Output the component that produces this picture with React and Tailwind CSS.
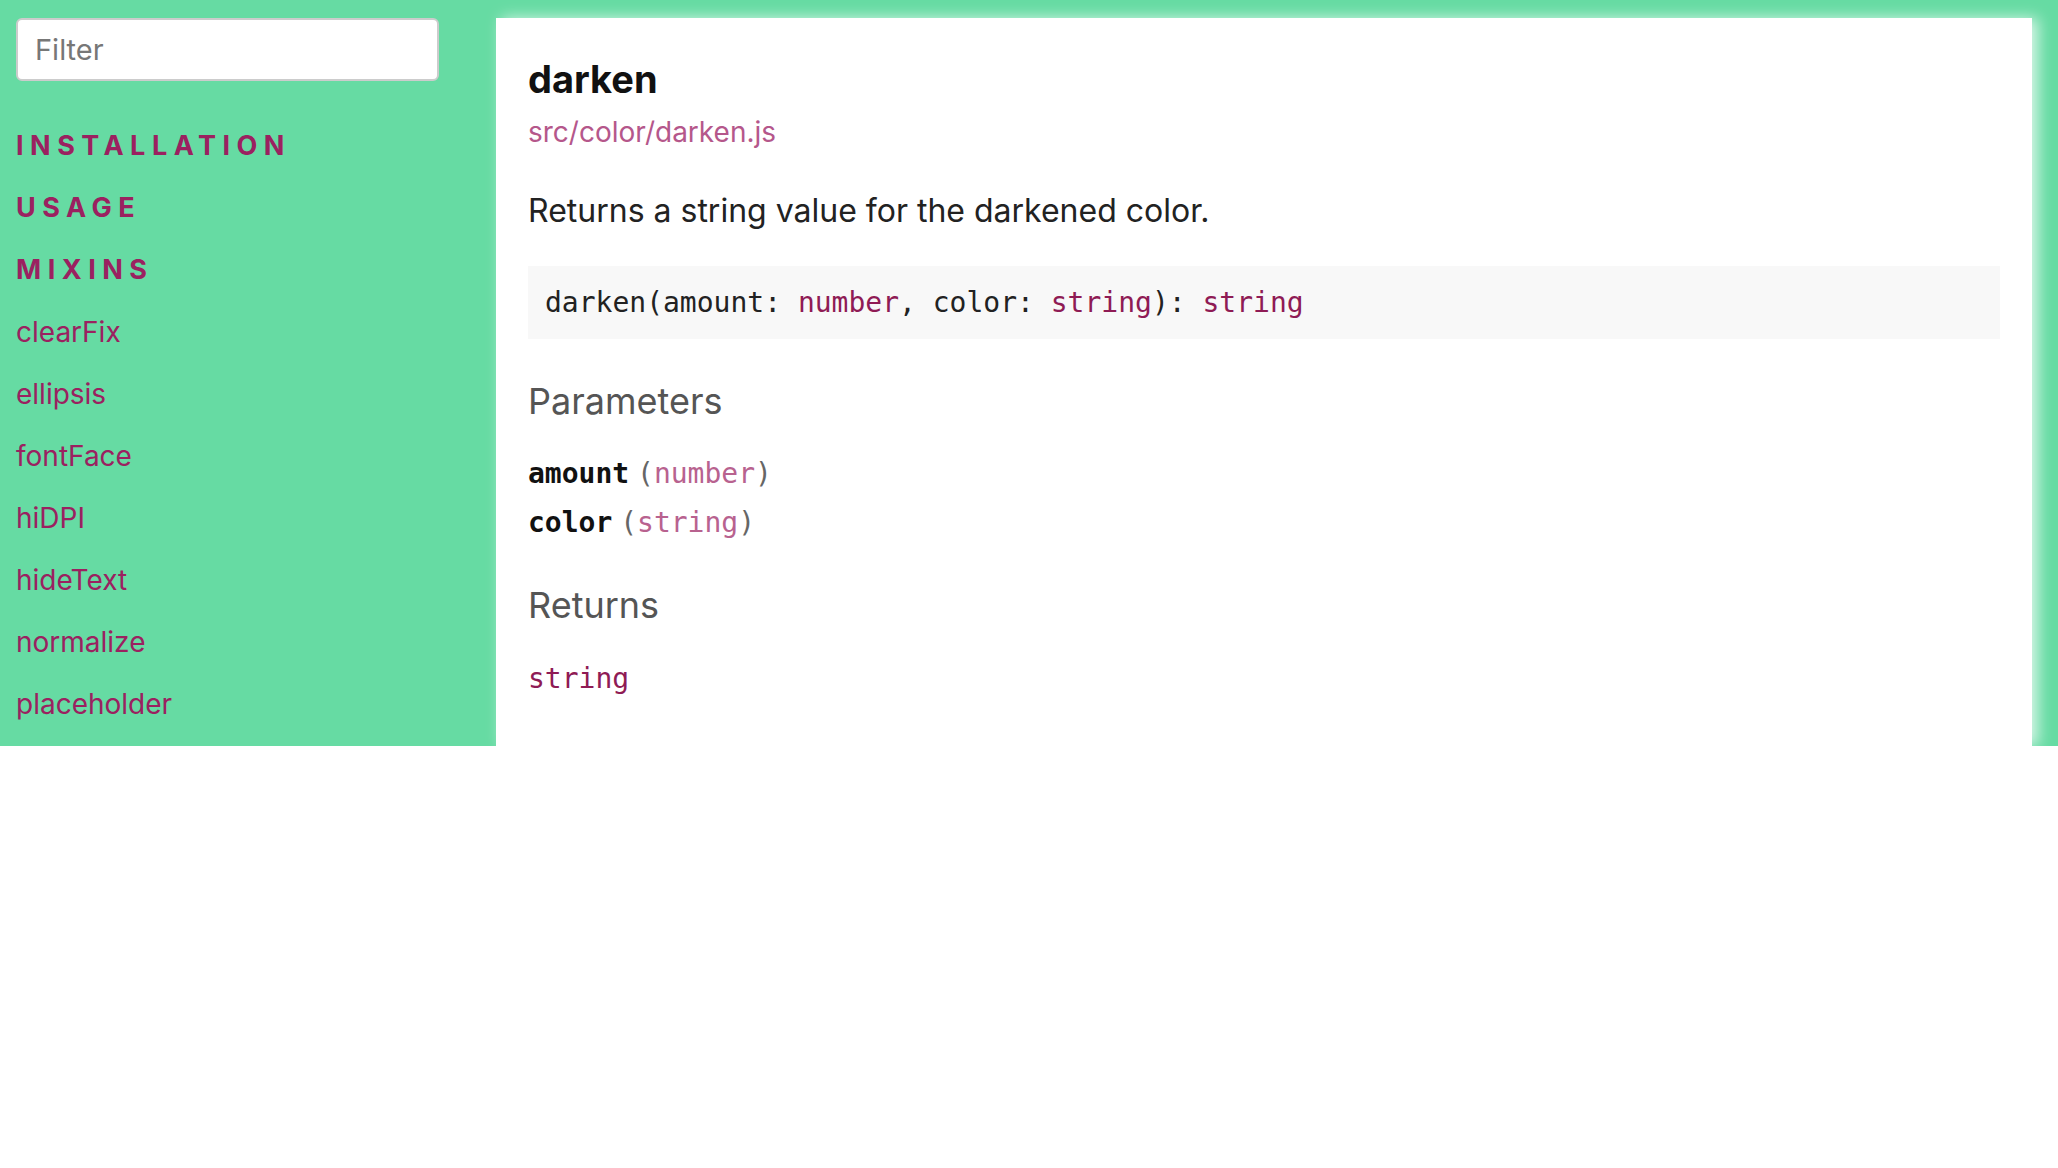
import React from "react";

const sans = { fontFamily: "Inter, 'Noto Sans', sans-serif" };
const mono = { fontFamily: "'DejaVu Sans Mono', monospace" };

function NavHeading({ children }) {
  return (
    <div className="h-[62px] leading-[62px] text-[27px] font-bold tracking-[6.5px] text-[#9b2160]">
      {children}
    </div>
  );
}

function NavItem({ children }) {
  return (
    <div className="h-[62px] leading-[62px] text-[28px] text-[#9b2160]">{children}</div>
  );
}

function Param({ name, type }) {
  return (
    <div>
      <span className="font-bold text-[#111]" style={mono}>{name}</span>
      <span style={sans}> </span>
      <span className="text-[#666]" style={mono}>
        (<span className="text-[#b8628f]">{type}</span>)
      </span>
    </div>
  );
}

export default function App() {
  return (
    <div className="w-[2058px] bg-white min-h-[1168px]" style={sans}>
      <div className="flex h-[746px] bg-[#66dba3]">
        <aside className="w-[496px] shrink-0 pl-4 pt-[18px]">
          <input
            placeholder="Filter"
            className="block w-[423px] h-[63px] bg-white border-2 border-[#cccccc] rounded-md px-[17px] text-[29px] text-[#333] placeholder:text-[#777] outline-none"
          />
          <nav className="mt-[34px]">
            <NavHeading>INSTALLATION</NavHeading>
            <NavHeading>USAGE</NavHeading>
            <NavHeading>MIXINS</NavHeading>
            <NavItem>clearFix</NavItem>
            <NavItem>ellipsis</NavItem>
            <NavItem>fontFace</NavItem>
            <NavItem>hiDPI</NavItem>
            <NavItem>hideText</NavItem>
            <NavItem>normalize</NavItem>
            <NavItem>placeholder</NavItem>
          </nav>
        </aside>
        <main className="mt-[18px] w-[1536px] shrink-0 bg-white px-8 pt-[39px] shadow-[6px_0_14px_rgba(255,255,255,0.75)]">
          <h1 className="h-[44px] leading-[44px] text-[38px] font-bold text-[#111]">darken</h1>
          <div className="mt-[14px] h-[34px] leading-[34px] text-[28px] text-[#b5578b]">
            src/color/darken.js
          </div>
          <p className="mt-[44px] h-[36px] leading-[36px] text-[32px] text-[#222]">
            Returns a string value for the darkened color.
          </p>
          <div
            className="mt-[37px] h-[73px] leading-[73px] bg-[#f8f8f8] px-[17px] text-[28px] text-[#222]"
            style={mono}
          >
            darken(amount: <span className="text-[#8f1b55]">number</span>, color:{" "}
            <span className="text-[#8f1b55]">string</span>):{" "}
            <span className="text-[#8f1b55]">string</span>
          </div>
          <h2 className="mt-[42px] h-[40px] leading-[40px] text-[36px] text-[#555]">Parameters</h2>
          <div className="mt-[28px] text-[28px] leading-[48px]">
            <Param name="amount" type="number" />
            <Param name="color" type="string" />
          </div>
          <h2 className="mt-[38px] h-[40px] leading-[40px] text-[36px] text-[#555]">Returns</h2>
          <div
            className="mt-[37px] h-[34px] leading-[34px] text-[28px] text-[#8f1b55]"
            style={mono}
          >
            string
          </div>
        </main>
      </div>
    </div>
  );
}
